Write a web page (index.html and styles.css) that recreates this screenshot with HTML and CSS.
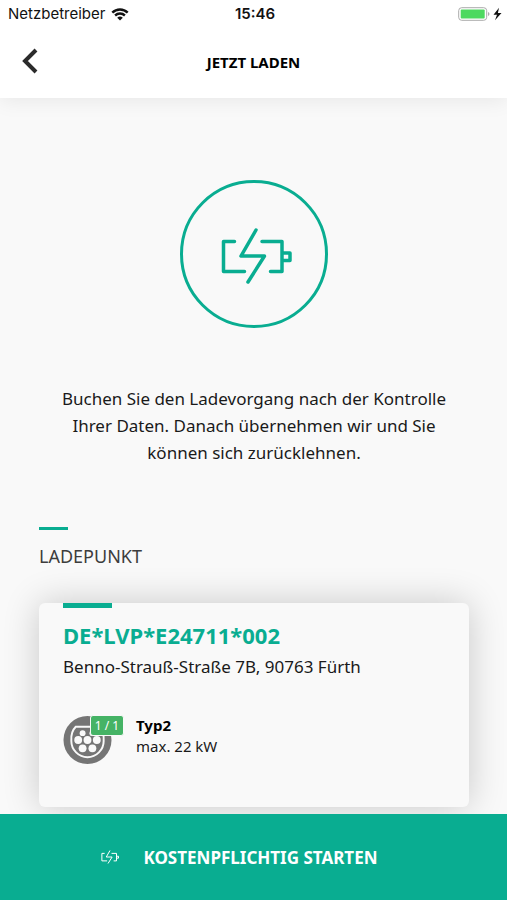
FILE: index.html
```html
<!DOCTYPE html>
<html lang="de">
<head>
<meta charset="utf-8">
<meta name="viewport" content="width=device-width, initial-scale=1">
<title>Jetzt laden</title>
<link rel="stylesheet" href="styles.css">
</head>
<body>
<svg class="defs" aria-hidden="true">
  <symbol id="charge" viewBox="0 0 72 56">
    <path d="M14.500 13.500H3.500V43.500H24.500M42 13.500H62V43.500H50.500M62 25H70V32.500H62M36 2L21 28H44.500L28 54"/>
  </symbol>
</svg>
<header class="header">
  <div class="status">
    <div class="carrier">
      <span>Netzbetreiber</span>
      <svg class="wifi" viewBox="0 0 18 13" aria-hidden="true">
        <path d="M1.300 4.700C5.500 .500 12.500 .500 16.700 4.700M4.100 7.500C6.900 4.900 11.100 4.900 13.900 7.500"/>
        <path class="solid" d="M6.200 9.700Q9 7.500 11.800 9.700L9 12.500Z"/>
      </svg>
    </div>
    <time class="clock">15:46</time>
    <svg class="battery" viewBox="0 0 44 14" aria-hidden="true">
      <rect class="shell" x=".7" y=".7" width="28" height="12.600" rx="3"/>
      <rect class="level" x="2.700" y="2.500" width="24" height="9" rx="1"/>
      <path class="cap" d="M30 5V9Q31.500 8.500 31.500 7T30 5Z"/>
      <path class="bolt" d="M41 .8L35.500 7.700H39L37 13.200L43.500 6H39.900Z"/>
    </svg>
  </div>
  <nav class="nav">
    <button class="back" type="button" aria-label="Zurück">
      <svg viewBox="0 0 16 26" aria-hidden="true"><path d="M14 2L3 13L14 24"/></svg>
    </button>
    <h1 class="title">JETZT LADEN</h1>
  </nav>
</header>
<main class="main">
  <div class="emblem"><svg aria-hidden="true"><use href="#charge"/></svg></div>
  <p class="intro">Buchen Sie den Ladevorgang nach der Kontrolle Ihrer Daten. Danach übernehmen wir und Sie können sich zurücklehnen.</p>
  <section class="point">
    <h2 class="heading">LADEPUNKT</h2>
    <article class="card">
      <h3 class="station">DE*LVP*E24711*002</h3>
      <p class="address">Benno-Strauß-Straße 7B, 90763 Fürth</p>
      <div class="plug">
        <div class="socket">
          <svg viewBox="0 0 50 50" aria-hidden="true">
            <circle class="disc" cx="25" cy="25" r="24.500"/>
            <path class="rim" d="M13 11.500H37C40.500 15 42 20 41.500 26A16.500 16.500 0 0 1 8.500 26C8 20 9.500 15 13 11.500Z"/>
            <g class="pins"><circle cx="20" cy="18" r="3"/><circle cx="30" cy="18" r="3"/><circle cx="15.500" cy="25" r="4"/><circle cx="25" cy="25" r="4"/><circle cx="34.500" cy="25" r="4"/><circle cx="20" cy="33.500" r="4"/><circle cx="30" cy="33.500" r="4"/></g>
          </svg>
          <span class="count">1 / 1</span>
        </div>
        <div class="details">
          <p class="type">Typ2</p>
          <p class="power">max. 22 kW</p>
        </div>
      </div>
    </article>
  </section>
</main>
<button class="start" type="button">
  <svg aria-hidden="true"><use href="#charge"/></svg>
  <span>KOSTENPFLICHTIG STARTEN</span>
</button>
</body>
</html>
```
FILE: styles.css
```css
* { box-sizing: border-box; }

body {
  margin: 0;
  min-height: 100vh;
  display: flex;
  flex-direction: column;
  background: #f9f9f9;
  color: #1a1a1a;
  font-family: "Noto Sans", sans-serif;
}

h1, h2, h3, p { margin: 0; }

button {
  border: 0;
  font: inherit;
  cursor: pointer;
}

svg {
  display: block;
  fill: none;
  stroke: currentColor;
}

.defs {
  position: absolute;
  width: 0;
  height: 0;
}

.header {
  background: #fff;
  box-shadow: 0 2px 20px rgba(0, 0, 0, 0.08);
}

.status {
  display: grid;
  grid-template-columns: 1fr auto 1fr;
  align-items: center;
  height: 28px;
  padding: 0 5px 0 8px;
  color: #111;
  font: 15px/28px Inter, sans-serif;
}

.carrier {
  display: flex;
  align-items: center;
  gap: 6px;
}

.wifi {
  width: 18px;
  height: 13px;
  stroke-width: 2.4;
}

.wifi .solid {
  fill: currentColor;
  stroke: none;
}

.clock { font-weight: 600; }

.battery {
  justify-self: end;
  width: 44px;
  height: 14px;
  stroke: none;
}

.battery .shell { stroke: #aaa; }
.level { fill: #4cd95f; }
.cap { fill: #aaa; }
.bolt { fill: #111; }

.nav {
  display: grid;
  grid-template-columns: 1fr auto 1fr;
  align-items: center;
  height: 70px;
  padding: 0 22px;
}

.back {
  justify-self: start;
  padding: 0 0 4px;
  background: none;
  color: #2b2b2b;
}

.back svg {
  width: 16px;
  height: 26px;
  stroke-width: 4;
}

.title {
  padding-bottom: 2px;
  color: #000;
  font-size: 15px;
  font-weight: 700;
}

.main {
  flex: 1;
  padding: 82px 38px 7px 39px;
}

.emblem {
  display: grid;
  place-items: center;
  width: 148px;
  height: 148px;
  margin: 0 auto;
  border: 3px solid #09ad91;
  border-radius: 50%;
  color: #09ad91;
}

.emblem svg {
  width: 72px;
  height: 56px;
  margin: 4px 0 0 4px;
  stroke-width: 3.5;
  stroke-linecap: round;
  stroke-linejoin: round;
}

.intro {
  margin: 57px 16px 0;
  font-size: 17px;
  line-height: 27px;
  text-align: center;
}

.point { margin-top: 61px; }

.heading {
  color: #3d3d3d;
  font-size: 18px;
  font-weight: 400;
  line-height: 28px;
}

.heading::before {
  content: "";
  display: block;
  width: 29px;
  height: 3px;
  margin-bottom: 12px;
  background: #09ad91;
}

.card {
  margin-top: 33px;
  padding: 0 24px 42px;
  border-radius: 6px;
  background: #f9f9f9;
  box-shadow: 0 0 36px rgba(0, 0, 0, 0.2);
}

.card::before {
  content: "";
  display: block;
  width: 49px;
  height: 5px;
  background: #09ad91;
}

.station {
  margin-top: 12px;
  color: #09ad91;
  font-size: 22px;
  font-weight: 700;
  line-height: 30px;
}

.address {
  margin-top: 4px;
  font-size: 17px;
  line-height: 26px;
}

.plug {
  display: flex;
  align-items: flex-start;
  gap: 24px;
  margin-top: 35px;
}

.socket { position: relative; }

.socket svg {
  width: 49px;
  height: 50px;
}

.disc { fill: #757575; stroke: none; }
.rim { stroke: #f9f9f9; stroke-width: 2; }
.pins { fill: #f9f9f9; stroke: none; }

.count {
  position: absolute;
  top: 0;
  left: 27px;
  width: 34px;
  border: 1px solid #f9f9f9;
  border-radius: 3px;
  background: #45b365;
  color: #fff;
  font-size: 12px;
  line-height: 19px;
  text-align: center;
}

.type,
.power {
  font-size: 15px;
  line-height: 21px;
}

.type {
  color: #000;
  font-weight: 700;
}

.start {
  position: sticky;
  bottom: 0;
  display: flex;
  align-items: center;
  justify-content: center;
  gap: 24px;
  width: 100%;
  height: 86px;
  padding: 0 28px 0 0;
  background: #09ad91;
  color: #fff;
  font-size: 17px;
  font-weight: 700;
}

.start svg {
  width: 18px;
  height: 14px;
  stroke-width: 4;
}
```
